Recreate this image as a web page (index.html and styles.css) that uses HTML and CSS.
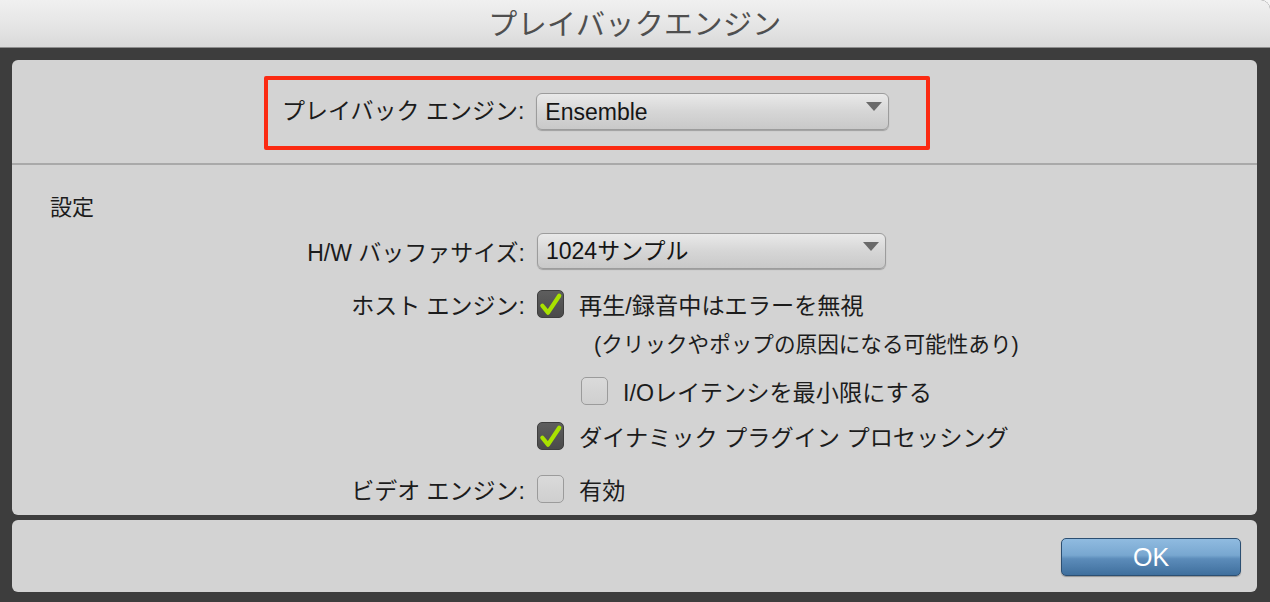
FILE: index.html
```html
<!DOCTYPE html>
<html lang="ja">
<head>
<meta charset="utf-8">
<title>プレイバックエンジン</title>
<link rel="stylesheet" href="styles.css">
</head>
<body>
<div class="window">
  <header class="titlebar">プレイバックエンジン</header>
  <main class="content">
    <section class="panel main-panel">
      <div class="engine-row">
        <div class="highlight">
          <span class="label">プレイバック エンジン:</span>
          <div class="select wide"><span>Ensemble</span><i class="arrow"></i></div>
        </div>
      </div>
      <div class="separator"></div>
      <div class="settings">
        <div class="heading">設定</div>
        <div class="row r-hw">
          <span class="label col">H/W バッファサイズ:</span>
          <div class="select"><span>1024サンプル</span><i class="arrow"></i></div>
        </div>
        <div class="row r-host">
          <span class="label col">ホスト エンジン:</span>
          <label class="check"><span class="box on"><svg viewBox="0 0 20 20"><path d="M3.5 11 L8 16.5 L17 3" /></svg></span>再生/録音中はエラーを無視</label>
        </div>
        <div class="row r-note">
          <span class="col"></span>
          <span class="note">(クリックやポップの原因になる可能性あり)</span>
        </div>
        <div class="row r-io">
          <span class="col"></span>
          <label class="check indent"><span class="box"></span>I/Oレイテンシを最小限にする</label>
        </div>
        <div class="row r-dyn">
          <span class="col"></span>
          <label class="check"><span class="box on"><svg viewBox="0 0 20 20"><path d="M3.5 11 L8 16.5 L17 3" /></svg></span>ダイナミック プラグイン プロセッシング</label>
        </div>
        <div class="row r-video">
          <span class="label col">ビデオ エンジン:</span>
          <label class="check"><span class="box"></span>有効</label>
        </div>
      </div>
    </section>
    <section class="panel footer-panel">
      <button class="ok">OK</button>
    </section>
  </main>
</div>
</body>
</html>
```

FILE: styles.css
```css
html, body {
  margin: 0;
  padding: 0;
  background: #f4f4f4;
}

body {
  width: 1270px;
  height: 602px;
  overflow: hidden;
  font-family: "Liberation Sans", "Noto Sans CJK JP", sans-serif;
  color: #1c1c1c;
}

.window {
  height: 602px;
  background: #3d3d3d;
  border-top-right-radius: 9px;
  display: flex;
  flex-direction: column;
}

.titlebar {
  height: 47px;
  border-bottom: 1px solid #8e8e8e;
  background: linear-gradient(#f0f0f0, #e4e4e4 60%, #d9d9d9);
  border-top-right-radius: 9px;
  font-family: "Noto Sans CJK JP", sans-serif;
  font-size: 29px;
  line-height: 45px;
  color: #4f4f4f;
  text-align: center;
  letter-spacing: 0.4px;
}

.content {
  padding: 12px 13px 10px 12px;
  display: flex;
  flex-direction: column;
  gap: 5px;
  flex: 1;
}

.panel {
  background: #d3d3d3;
  border-radius: 6px;
}

.main-panel {
  height: 455px;
}

.footer-panel {
  height: 72px;
  display: flex;
  justify-content: flex-end;
  align-items: flex-start;
  padding: 18px 16px 0 0;
  box-sizing: border-box;
}

/* playback engine selector */
.engine-row {
  padding: 16px 0 0 252px;
  height: 103px;
  box-sizing: border-box;
}

.highlight {
  width: 666px;
  height: 74px;
  box-sizing: border-box;
  border: 4px solid #fb2a12;
  border-radius: 2px;
  display: flex;
  align-items: flex-start;
  padding: 13px 0 0 14px;
  gap: 12px;
}

.highlight .label {
  line-height: 37px;
}

.label {
  font-size: 23px;
  white-space: nowrap;
}

.select {
  position: relative;
  width: 349px;
  height: 36px;
  box-sizing: border-box;
  border: 1px solid #9c9c9c;
  border-radius: 6px;
  background: linear-gradient(#e9e9e9, #d6d6d6 50%, #c9c9c9);
  box-shadow: 0 1px 1px rgba(0, 0, 0, 0.25);
  font-size: 23px;
  line-height: 34px;
  padding-left: 8px;
  color: #151515;
}

.select.wide {
  width: 353px;
  height: 37px;
  line-height: 37px;
}

.arrow {
  position: absolute;
  top: 8px;
  right: 6px;
  width: 0;
  height: 0;
  border-left: 8px solid transparent;
  border-right: 8px solid transparent;
  border-top: 9px solid #6a6a6a;
}

.separator {
  height: 2px;
  background: #a9a9a9;
}

/* settings area */
.settings {
  display: flex;
  flex-direction: column;
}

.heading {
  padding: 22px 0 0 38px;
  font-family: "Noto Sans CJK JP", sans-serif;
  font-size: 22px;
  line-height: 36px;
  height: 60px;
  box-sizing: border-box;
}

.row {
  display: flex;
  align-items: center;
  height: 38px;
}

.row .col {
  width: 513px;
  margin-right: 12px;
  text-align: right;
  flex: none;
}

.r-hw { height: 40px; margin-top: 6px; margin-bottom: 14px; }
.r-io { margin-top: 11px; }
.r-dyn { margin-top: 7px; }
.r-video { margin-top: 15px; }

.check {
  display: flex;
  align-items: center;
  gap: 15px;
  font-size: 23.2px;
  white-space: nowrap;
}

.check.indent {
  margin-left: 44px;
}

.note {
  font-size: 21.6px;
  margin-left: 57px;
  white-space: nowrap;
}

.box {
  width: 27px;
  height: 28px;
  box-sizing: border-box;
  border: 1px solid #9b9b9b;
  border-radius: 5px;
  background: linear-gradient(#dadada, #cfcfcf);
  flex: none;
  display: flex;
  align-items: center;
  justify-content: center;
}

.box.on {
  background: linear-gradient(#5e5e5e, #4a4a4a);
  border-color: #3e3e3e;
}

.box svg {
  width: 25px;
  height: 25px;
}

.box svg path {
  fill: none;
  stroke: #a8e200;
  stroke-width: 3.4;
  stroke-linecap: round;
  stroke-linejoin: round;
}

.ok {
  width: 180px;
  height: 38px;
  border: 1px solid #2c4f72;
  border-radius: 5px;
  background: linear-gradient(#90bbe0, #78a7d0 45%, #5c8cba 55%, #3f6f9d);
  color: #ffffff;
  font-family: "Liberation Sans", sans-serif;
  font-size: 25px;
  line-height: 36px;
  padding: 0;
  box-shadow: 0 1px 1px rgba(0, 0, 0, 0.3);
}
```
